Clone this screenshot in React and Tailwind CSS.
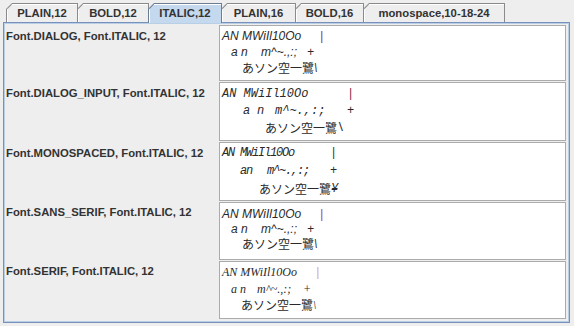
const tabs = [
  { label: "PLAIN,12", w: "w-[72px]" },
  { label: "BOLD,12", w: "w-[72px]" },
  { label: "ITALIC,12", w: "w-[74px]", selected: true },
  { label: "PLAIN,16", w: "w-[75px]" },
  { label: "BOLD,16", w: "w-[69px]" },
  { label: "monospace,10-18-24", w: "w-[142px]" },
];

const sans = "font-['Liberation_Sans','Noto_Sans_CJK_JP',sans-serif] text-[12px] italic";
const mono = "font-['Liberation_Mono','Noto_Sans_CJK_JP',monospace] text-[12px] italic";
const gothic = "font-['Liberation_Mono','Noto_Sans_CJK_JP',monospace] text-[12px] tracking-[-1.2px] italic";
const serif = "font-['Liberation_Serif','Noto_Sans_CJK_JP',serif] text-[12px] italic";
const cjk = "font-['Noto_Sans_CJK_JP',sans-serif] text-[12px] not-italic tracking-normal";

const sansLines = (pipe) => [
  [["w-[1px]", ""], ["w-[98px]", "AN MWiIl10Oo"], ["", "|", pipe]],
  [["w-[10px]", ""], ["w-[10px]", "a"], ["w-[20px]", "n"], ["w-[46px]", "m^~.,:;"], ["", "+"]],
  [["w-[21px]", ""], ["", "あソン空一鷺", cjk], ["", "\\"]],
];

const rows = [
  {
    label: "Font.DIALOG, Font.ITALIC, 12",
    box: "h-[56px] pt-[2px]",
    lab: "pt-[4px]",
    font: sans,
    line: "h-[16px]",
    lines: sansLines("text-[#7a2f8f]"),
  },
  {
    label: "Font.DIALOG_INPUT, Font.ITALIC, 12",
    box: "h-[59px] pt-[2px]",
    lab: "pt-[4px]",
    font: mono,
    line: "h-[17px]",
    lines: [
      [["w-[1px]", ""], ["w-[125px]", "AN MWiIl10Oo"], ["", "|", "text-[#7e2a45]"]],
      [["w-[22px]", ""], ["w-[14px]", "a"], ["w-[18px]", "n"], ["w-[72px]", "m^~.,:;"], ["", "+"]],
      [["w-[44px]", ""], ["", "あソン空一鷺", cjk], ["", "\\"]],
    ],
  },
  {
    label: "Font.MONOSPACED, Font.ITALIC, 12",
    box: "h-[59px] pt-px",
    lab: "pt-[4px]",
    font: gothic,
    line: "h-[18px]",
    lines: [
      [["w-[1px]", ""], ["w-[108px]", "AN MWiIl10Oo"], ["", "|", "text-[#333333]"]],
      [["w-[19px]", ""], ["w-[6px]", "a"], ["w-[21px]", "n"], ["w-[63px]", "m^~.,:;"], ["", "+"]],
      [["w-[38px]", ""], ["", "あソン空一鷺", cjk + " italic"], ["", "¥"]],
    ],
  },
  {
    label: "Font.SANS_SERIF, Font.ITALIC, 12",
    box: "h-[58px] pt-[3px]",
    lab: "pt-[3px]",
    font: sans,
    line: "h-[15px]",
    lines: sansLines("text-[#9a3aa0]"),
  },
  {
    label: "Font.SERIF, Font.ITALIC, 12",
    box: "h-[58px] pt-[2px]",
    lab: "pt-[3px]",
    font: serif,
    line: "h-[16.5px]",
    lines: [
      [["w-[1px]", ""], ["w-[94px]", "AN MWiIl10Oo"], ["", "|", "text-[#c0687a]"]],
      [["w-[10px]", ""], ["w-[9px]", "a"], ["w-[17px]", "n"], ["w-[46px]", "m^~.,:;"], ["", "+"]],
      [["w-[20px]", ""], ["", "あソン空一鷺", cjk + " italic"], ["", "\\"]],
    ],
  },
];

function Tab({ label, w, selected, first }) {
  return (
    <div
      className={`${w} ${first ? "" : "-ml-px"} ${
        selected ? "relative z-10 h-[20px] bg-[#6c7c94]" : "h-[19px] bg-[#8a8a8a]"
      } shrink-0 px-px pt-px [clip-path:polygon(6px_0,100%_0,100%_100%,0_100%,0_6px)]`}
    >
      <div
        className={`h-full ${
          selected ? "bg-[#c4d8ee]" : "bg-[#eeeeee]"
        } shadow-[inset_1px_1px_0_#ffffff] [clip-path:polygon(5.5px_0,100%_0,100%_100%,0_100%,0_5.5px)] flex items-center justify-center text-[11.3px] font-bold text-[#333333] whitespace-nowrap`}
      >
        {label}
      </div>
    </div>
  );
}

export default function App() {
  return (
    <div className="w-[574px] h-[326px] bg-[#eeeeee] overflow-hidden font-['Liberation_Sans',sans-serif]">
      {/* Tab strip */}
      <div className="flex items-start h-[22px] pt-[3px] pl-[6px]">
        {tabs.map((t, i) => (
          <Tab key={t.label} {...t} first={i === 0} />
        ))}
      </div>

      {/* Content panel */}
      <div className="ml-[3px] w-[567px] h-[301px] border border-[#7990bd]">
        <div className="h-full border border-[#b8cfe5] pt-px flex flex-col gap-px">
          {rows.map((r) => (
            <div key={r.label} className="flex">
              <div className={`w-[214px] shrink-0 pl-px ${r.lab} text-[11.3px] leading-[14px] font-bold text-[#333333]`}>
                {r.label}
              </div>
              <div className={`w-[347px] shrink-0 ${r.box} border border-[#ababab] bg-white pl-px text-[#2a2a2a] ${r.font}`}>
                {r.lines.map((segs, li) => (
                  <div key={li} className={`flex items-center whitespace-pre ${r.line}`}>
                    {segs.map(([w, txt, cls], si) => (
                      <span key={si} className={`${w} shrink-0 ${cls || ""}`}>
                        {txt}
                      </span>
                    ))}
                  </div>
                ))}
              </div>
            </div>
          ))}
        </div>
      </div>
    </div>
  );
}
